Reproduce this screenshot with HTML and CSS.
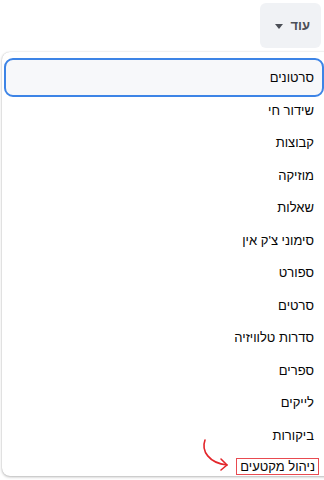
FILE: index.html
```html
<!DOCTYPE html>
<html lang="he" dir="rtl">
<head>
<meta charset="utf-8">
<link rel="stylesheet" href="styles.css">
</head>
<body>
<div class="page">
  <div class="topbar">
    <button class="more-btn"><span class="more-label">עוד</span><span class="caret"></span></button>
  </div>
  <div class="menu">
    <ul class="menu-list">
      <li class="item focused"><span>סרטונים</span></li>
      <li class="item"><span>שידור חי</span></li>
      <li class="item"><span>קבוצות</span></li>
      <li class="item"><span>מוזיקה</span></li>
      <li class="item"><span>שאלות</span></li>
      <li class="item"><span>סימוני צ'ק אין</span></li>
      <li class="item"><span>ספורט</span></li>
      <li class="item"><span>סרטים</span></li>
      <li class="item"><span>סדרות טלוויזיה</span></li>
      <li class="item"><span>ספרים</span></li>
      <li class="item"><span>לייקים</span></li>
      <li class="item"><span>ביקורות</span></li>
      <li class="item last"><span class="boxed">ניהול מקטעים</span>
        <svg class="arrow" width="34" height="34" viewBox="0 0 34 34" fill="none" stroke="#e3262b" stroke-width="1.6" stroke-linecap="round" stroke-linejoin="round">
          <path d="M5 2 C1 13 9 25 27 27"/>
          <path d="M21 21 L27 27 L21 32"/>
        </svg>
      </li>
    </ul>
  </div>
</div>
</body>
</html>
```
FILE: styles.css
```css
* { box-sizing: border-box; }
html, body { margin: 0; padding: 0; background: #ffffff; }
body {
  width: 324px;
  height: 480px;
  overflow: hidden;
  font-family: "Liberation Sans", Arial, "Noto Sans", sans-serif;
  color: #050505;
}
.page { position: relative; width: 324px; height: 480px; }
.topbar {
  display: flex;
  justify-content: flex-start;
  padding: 3px 3px 0 0;
  height: 52px;
}
.more-btn {
  display: flex;
  align-items: center;
  gap: 7px;
  height: 45px;
  width: 61px;
  padding: 0 11px 0 0;
  border: none;
  border-radius: 6px;
  background: #f0f2f5;
  font-family: inherit;
  font-size: 13px;
  font-weight: 700;
  color: #4b4f56;
  direction: rtl;
}
.caret {
  width: 0; height: 0;
  border-left: 4px solid transparent;
  border-right: 4px solid transparent;
  border-top: 5px solid #4b4f56;
  margin-top: 1px;
}
.menu {
  margin: 0 -12px 0 2px;
  height: 424px;
  background: #fff;
  border-radius: 8px;
  box-shadow: 0 1px 3px rgba(0,0,0,0.28), 0 0 1px rgba(0,0,0,0.2);
  padding: 6px 0 0 0;
}
.menu-list {
  list-style: none;
  margin: 0;
  padding: 0;
}
.item {
  position: relative;
  display: flex;
  align-items: center;
  height: 32.5px;
  padding-right: 22px;
  font-size: 13px;
}
.item.focused {
  height: 39px;
  margin: 0 12px -3px 2px;
  border: 2px solid #3d84e6;
  border-radius: 9px;
  background: #f7f8fa;
  padding-right: 8px;
}
.item.last { height: 30px; }
.boxed {
  border: 1px solid #e84a50;
  padding: 0 3px;
  line-height: 15px;
  margin-right: -5px;
}
.arrow {
  position: absolute;
  left: 198px;
  top: -14px;
}
```
